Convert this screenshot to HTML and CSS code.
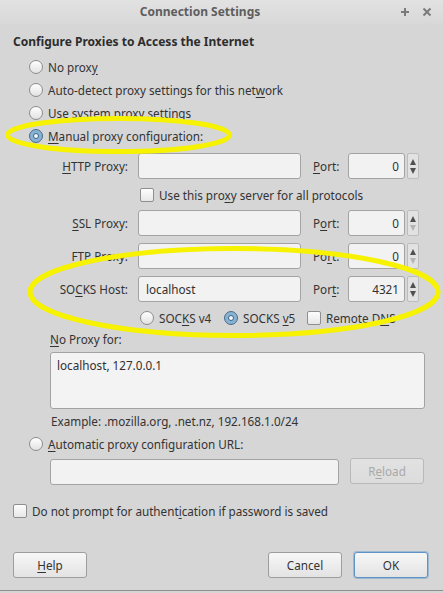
FILE: index.html
```html
<!DOCTYPE html>
<html>
<head>
<meta charset="utf-8">
<title>Connection Settings</title>
<link rel="stylesheet" href="styles.css">
</head>
<body>
<div class="window">
  <header class="titlebar">
    <div class="title">Connection Settings</div>
    <div class="wm-buttons">
      <svg class="wm-icon" width="10" height="10" viewBox="0 0 10 10"><path d="M5 1v8M1 5h8" stroke="#7b7b7b" stroke-width="2"/></svg>
      <svg class="wm-icon" width="10" height="10" viewBox="0 0 10 10"><path d="M1.5 1.5l7 7M8.5 1.5l-7 7" stroke="#7b7b7b" stroke-width="2"/></svg>
    </div>
  </header>

  <main class="content">
    <h1 class="heading">Configure Proxies to Access the Internet</h1>

    <div class="radio-list">
      <div class="radio-row"><span class="radio"></span><span>No prox<u>y</u></span></div>
      <div class="radio-row"><span class="radio"></span><span>Auto-detect proxy settings for this net<u>w</u>ork</span></div>
      <div class="radio-row"><span class="radio"></span><span>Use system proxy settings</span></div>
      <div class="radio-row"><span class="radio checked"></span><span><u>M</u>anual proxy configuration:</span></div>
    </div>

    <div class="proxy-grid">
      <div class="plabel"><u>H</u>TTP Proxy:</div>
      <div class="field"></div>
      <div class="port-label"><u>P</u>ort:</div>
      <div class="field port">0</div>
      <div class="spin"><span class="arr up"></span><span class="arr down"></span></div>

      <div class="share-row"><span class="checkbox"></span><span>Use this pro<u>x</u>y server for all protocols</span></div>

      <div class="plabel"><u>S</u>SL Proxy:</div>
      <div class="field"></div>
      <div class="port-label">P<u>o</u>rt:</div>
      <div class="field port">0</div>
      <div class="spin"><span class="arr up"></span><span class="arr down off"></span></div>

      <div class="plabel"><u>F</u>TP Proxy:</div>
      <div class="field"></div>
      <div class="port-label">Po<u>r</u>t:</div>
      <div class="field port">0</div>
      <div class="spin"><span class="arr up"></span><span class="arr down off"></span></div>

      <div class="plabel">SO<u>C</u>KS Host:</div>
      <div class="field host">localhost</div>
      <div class="port-label">Por<u>t</u>:</div>
      <div class="field port">4321</div>
      <div class="spin"><span class="arr up"></span><span class="arr down"></span></div>

      <div class="socks-row">
        <div class="socks-opt v4"><span class="radio"></span><span>SOC<u>K</u>S v4</span></div>
        <div class="socks-opt v5"><span class="radio checked"></span><span>SOCKS <u>v</u>5</span></div>
        <div class="socks-opt"><span class="checkbox"></span><span>Remote D<u>N</u>S</span></div>
      </div>
    </div>

    <div class="noproxy">
      <div class="np-label"><u>N</u>o Proxy for:</div>
      <div class="textarea">localhost, 127.0.0.1</div>
      <div class="example">Example: .mozilla.org, .net.nz, 192.168.1.0/24</div>
    </div>

    <div class="radio-row auto-row"><span class="radio"></span><span><u>A</u>utomatic proxy configuration URL:</span></div>

    <div class="url-row">
      <div class="field url"></div>
      <div class="btn disabled">R<u>e</u>load</div>
    </div>

    <div class="check-row"><span class="checkbox"></span><span>Do not prompt for authent<u>i</u>cation if password is saved</span></div>

    <div class="buttons">
      <div class="btn"><u>H</u>elp</div>
      <div class="spacer"></div>
      <div class="btn">Cancel</div>
      <div class="btn ok">OK</div>
    </div>
  </main>

  <svg class="annotations" width="443" height="593" viewBox="0 0 443 593">
    <ellipse cx="118.5" cy="135" rx="111" ry="16.5" fill="none" stroke="#f6f200" stroke-width="5"/>
    <ellipse cx="234" cy="292" rx="204" ry="43.5" fill="none" stroke="#f6f200" stroke-width="5"/>
  </svg>
</div>
</body>
</html>
```

FILE: styles.css
```css
html, body {
  margin: 0;
  padding: 0;
}

body {
  width: 443px;
  height: 593px;
  background: #d6d6d6;
  font-family: "Noto Sans", "Open Sans", sans-serif;
  font-size: 11.7px;
  color: #333333;
  overflow: hidden;
}

u {
  text-decoration: underline;
  text-underline-offset: 2px;
}

.window {
  position: relative;
  width: 443px;
  height: 590px;
  border-bottom: 1px solid #8e8e8e;
  display: flex;
  flex-direction: column;
}

.titlebar {
  height: 24px;
  display: flex;
  align-items: center;
  background: linear-gradient(#e2e2e2, #d8d8d8);
}

.title {
  flex: 1;
  text-align: center;
  font-weight: bold;
  font-size: 12px;
  color: #5e5e5e;
  line-height: 24px;
}

.wm-buttons {
  width: 43px;
  display: flex;
  align-items: center;
  gap: 12px;
}

.wm-icon {
  display: block;
}

.content {
  flex: 1;
  display: flex;
  flex-direction: column;
  padding: 9px 15px 0 13px;
}

.heading {
  margin: 0;
  font-size: 12px;
  font-weight: bold;
  line-height: 18px;
  color: #2d2d2d;
}

.radio-list {
  margin: 4px 0 0 16px;
  display: flex;
  flex-direction: column;
}

.radio-row {
  height: 23px;
  display: flex;
  align-items: center;
  gap: 5px;
}

.radio {
  flex: none;
  width: 12px;
  height: 12px;
  border: 1px solid #8d8d8d;
  border-radius: 50%;
  background: linear-gradient(#ffffff, #e2e2e2);
  box-sizing: content-box;
  position: relative;
}

.radio.checked {
  border-color: #4b6c86;
  background: #86b2d4;
}

.radio.checked::after {
  content: "";
  position: absolute;
  left: 3px;
  top: 3px;
  width: 4px;
  height: 4px;
  border-radius: 50%;
  border: 1px solid #3b6284;
  background: #f4f8fb;
}

.checkbox {
  flex: none;
  width: 12px;
  height: 12px;
  border: 1px solid #8f8f8f;
  border-radius: 2px;
  background: linear-gradient(#fdfdfd, #e7e7e7);
}

.proxy-grid {
  margin: 6px 0 0 37px;
  display: grid;
  grid-template-columns: 88px 163px 47px 57px 14px;
  grid-template-rows: 26px 17px 26px 26px 26px 18px;
  row-gap: 7px;
  align-items: center;
}

.plabel {
  text-align: right;
  padding-right: 10px;
  white-space: nowrap;
}

.port-label {
  padding-left: 12px;
}

.field {
  height: 26px;
  box-sizing: border-box;
  border: 1px solid #a3a3a3;
  border-radius: 3px;
  background: #f2f2f2;
  line-height: 24px;
  padding: 0 6px;
  color: #303030;
}

.field.port {
  text-align: right;
  padding-right: 5px;
}

.field.host {
  padding-left: 7px;
}

.spin {
  margin-left: 2px;
  height: 26px;
  box-sizing: border-box;
  border: 1px solid #bdbdbd;
  border-radius: 2px;
  background: #e2e2e2;
  display: flex;
  flex-direction: column;
  align-items: center;
  justify-content: space-around;
  padding: 3px 0;
}

.arr {
  width: 0;
  height: 0;
  border-left: 3.5px solid transparent;
  border-right: 3.5px solid transparent;
}

.arr.up {
  border-bottom: 6px solid #505050;
}

.arr.down {
  border-top: 6px solid #505050;
}

.arr.down.off {
  border-top-color: #b4b4b4;
}

.share-row {
  grid-column: 2 / 6;
  height: 17px;
  display: flex;
  align-items: center;
  gap: 5px;
  padding-left: 2px;
}

.socks-row {
  grid-column: 2 / 6;
  display: flex;
  align-items: center;
  height: 18px;
  padding-left: 2px;
}

.socks-opt {
  display: flex;
  align-items: center;
  gap: 5px;
}

.socks-opt.v4 {
  width: 84px;
}

.socks-opt.v5 {
  width: 83px;
}

.noproxy {
  margin: 4px 0 0 37px;
  display: flex;
  flex-direction: column;
}

.np-label {
  line-height: 16px;
}

.textarea {
  margin-top: 5px;
  width: 375px;
  height: 57px;
  box-sizing: border-box;
  border: 1px solid #a3a3a3;
  border-radius: 3px;
  background: #f3f3f3;
  padding: 4px 6px;
  line-height: 16px;
  color: #303030;
}

.example {
  margin-top: 4px;
  line-height: 16px;
  padding-left: 1px;
}

.auto-row {
  margin: 4px 0 0 16px;
  height: 22px;
}

.url-row {
  margin: 3px 0 0 37px;
  display: flex;
  align-items: flex-start;
  gap: 11px;
}

.field.url {
  width: 289px;
  margin-top: 1px;
}

.btn {
  width: 74px;
  height: 26px;
  box-sizing: border-box;
  border: 1px solid #9d9d9d;
  border-radius: 3px;
  background: linear-gradient(#f7f7f7, #e3e3e3);
  display: flex;
  align-items: center;
  justify-content: center;
  color: #333333;
}

.btn.disabled {
  color: #a9a9a9;
  border-color: #b9b9b9;
  background: linear-gradient(#e2e2e2, #dcdcdc);
}

.check-row {
  margin-top: 17px;
  height: 18px;
  display: flex;
  align-items: center;
  gap: 5px;
}

.buttons {
  margin-top: 32px;
  display: flex;
  gap: 12px;
}

.buttons .spacer {
  flex: 1;
}

.btn.ok {
  border-color: #5f93c6;
  box-shadow: 0 0 0 1px rgba(112, 160, 206, 0.55);
}

.annotations {
  position: absolute;
  left: 0;
  top: 0;
  pointer-events: none;
}
```
